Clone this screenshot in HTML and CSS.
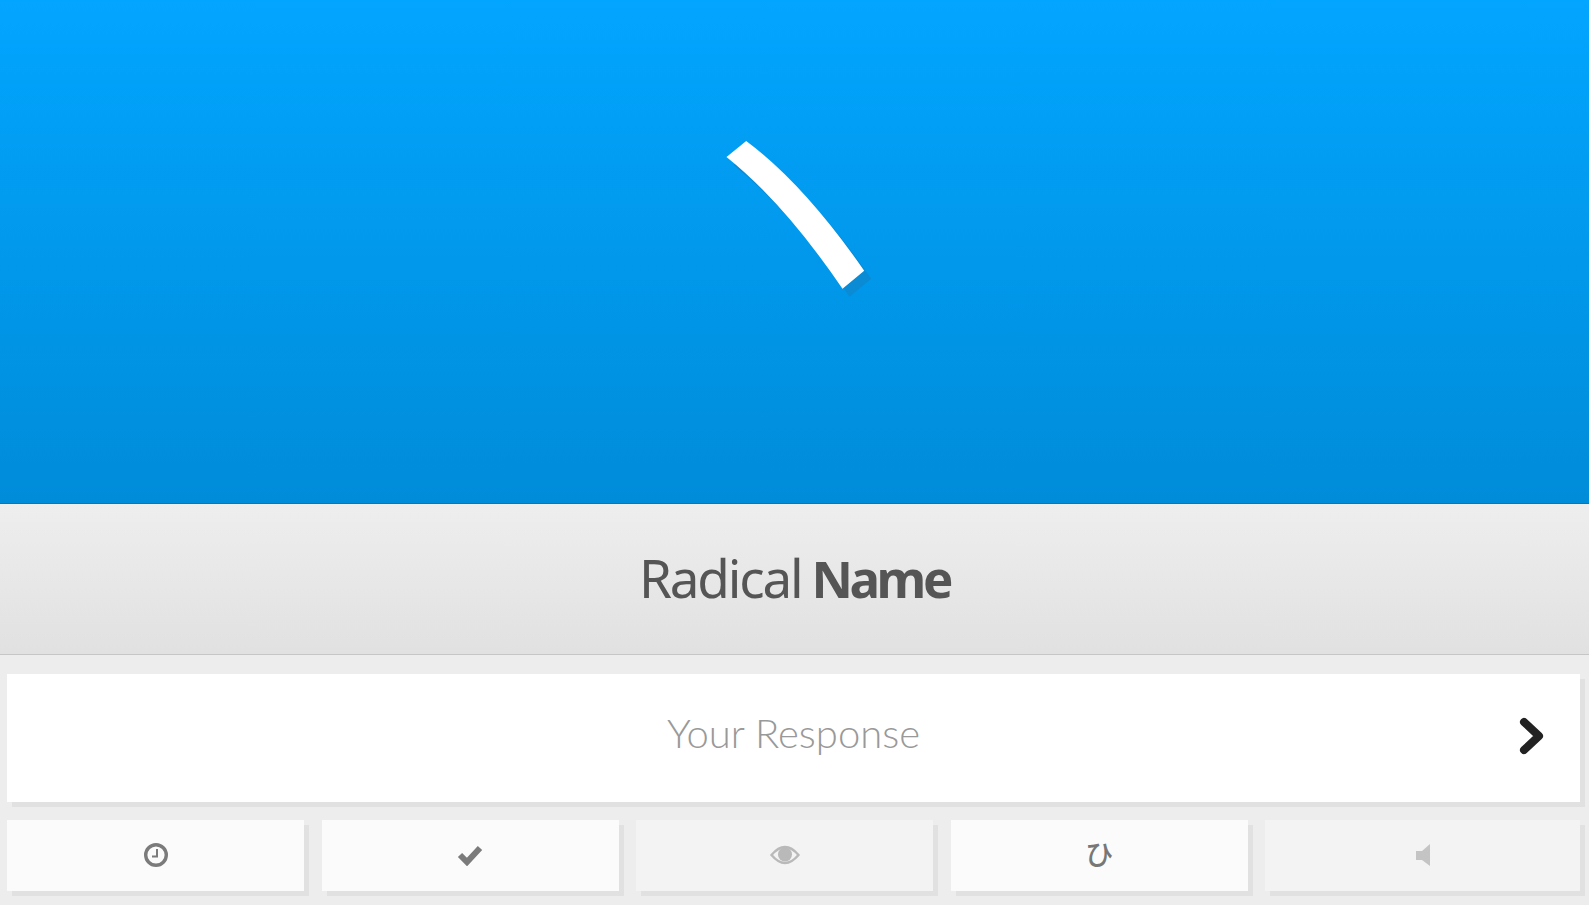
FILE: index.html
```html
<!DOCTYPE html>
<html>
<head>
  <title>Radical Name</title>
  <link rel="stylesheet" href="styles.css">
</head>
<body>
  <div class="character">
    <svg class="stroke" width="160" height="170" viewBox="0 0 160 170">
      <path class="stroke-shadow" d="M11.5 27 L31.2 11 Q89 54 149.2 140.7 L127.5 158.7 Q69 73 11.5 27 Z"/>
      <path class="stroke-main" d="M11.5 27 L31.2 11 Q89 54 149.2 140.7 L127.5 158.7 Q69 73 11.5 27 Z"/>
    </svg>
  </div>
  <div class="prompt"><span class="light">Radical</span> <b class="strong">Name</b></div>
  <div class="form">
    <div class="answer">
      <span class="placeholder">Your Response</span>
      <svg class="next" width="26" height="38" viewBox="0 0 26 38">
        <path d="M5 5 L20 19 L5 33" />
      </svg>
    </div>
    <div class="buttons">
      <div class="btn">
        <svg class="icon" width="26" height="26" viewBox="0 0 26 26">
          <circle cx="13" cy="13" r="10.3" fill="none" stroke="#7b7b7b" stroke-width="3.4"/>
          <path d="M14 7 V14.5 H9" fill="none" stroke="#7b7b7b" stroke-width="2"/>
        </svg>
      </div>
      <div class="btn">
        <svg class="icon" width="26" height="22" viewBox="0 0 26 22">
          <path d="M3 11 L10 18 L23 4" fill="none" stroke="#7b7b7b" stroke-width="6"/>
        </svg>
      </div>
      <div class="btn off">
        <svg class="icon" width="30" height="22" viewBox="0 0 30 22">
          <path d="M1.5 11 Q15 -5 28.5 11 Q15 27 1.5 11 Z" fill="none" stroke="#b9b9b9" stroke-width="2.4"/>
          <circle cx="15" cy="10.5" r="7" fill="#b9b9b9"/>
        </svg>
      </div>
      <div class="btn"><span class="kana">ひ</span></div>
      <div class="btn off last">
        <svg class="icon" width="16" height="24" viewBox="0 0 16 24">
          <path d="M1 8 H7 L15 1 V23 L7 17 H1 Z" fill="#c4c4c4"/>
        </svg>
      </div>
    </div>
  </div>
</body>
</html>
```

FILE: styles.css
```css
body {
  margin: 0;
  background: #ededed;
  font-family: "Noto Sans", sans-serif;
}

.character {
  height: 504px;
  padding-top: 130px;
  box-sizing: border-box;
  display: flex;
  justify-content: center;
  align-items: flex-start;
  background: linear-gradient(#02a5ff, #008cd9);
  border-bottom: 1px solid #0079c0;
}
.stroke-main {
  fill: #fff;
}
.stroke-shadow {
  fill: #0a8bd4;
  transform: translate(7px, 8px);
}

.prompt {
  height: 151px;
  box-sizing: border-box;
  display: flex;
  justify-content: center;
  align-items: baseline;
  padding-top: 37px;
  gap: 10px;
  font-size: 53px;
  color: #555;
  background: linear-gradient(#eee, #e1e1e1);
  border-bottom: 1px solid #c6c6c6;
}
.light {
  letter-spacing: -2.2px;
}
.strong {
  font-size: 51px;
  letter-spacing: -3.4px;
}

.form {
  padding: 19px 9px 14px 7px;
}
.answer {
  height: 128px;
  box-sizing: border-box;
  padding-bottom: 11px;
  position: relative;
  display: flex;
  justify-content: center;
  align-items: center;
  background: #fff;
  box-shadow: 5px 5px 0 #e1e1e1;
}
.placeholder {
  font-size: 40px;
  font-family: "Lato", sans-serif;
  font-weight: 300;
  color: #999;
}
.next {
  position: absolute;
  right: 35px;
  top: 43px;
}
.next path {
  fill: none;
  stroke: #222;
  stroke-width: 8;
  stroke-linecap: round;
  stroke-linejoin: round;
}

.buttons {
  display: flex;
  gap: 17.6px;
  margin-top: 18px;
}
.btn {
  width: 297px;
  height: 71px;
  display: flex;
  justify-content: center;
  align-items: center;
  background: #fbfbfb;
  box-shadow: 5px 5px 0 #e1e1e1;
}
.btn.off {
  background: #f3f3f3;
}
.btn.last {
  flex: 1;
}
.icon {
  margin-bottom: 1px;
}
.kana {
  font-family: "Noto Sans CJK JP", sans-serif;
  font-size: 28px;
  font-weight: 500;
  line-height: 30px;
  padding-bottom: 5px;
  color: #777;
}
```
